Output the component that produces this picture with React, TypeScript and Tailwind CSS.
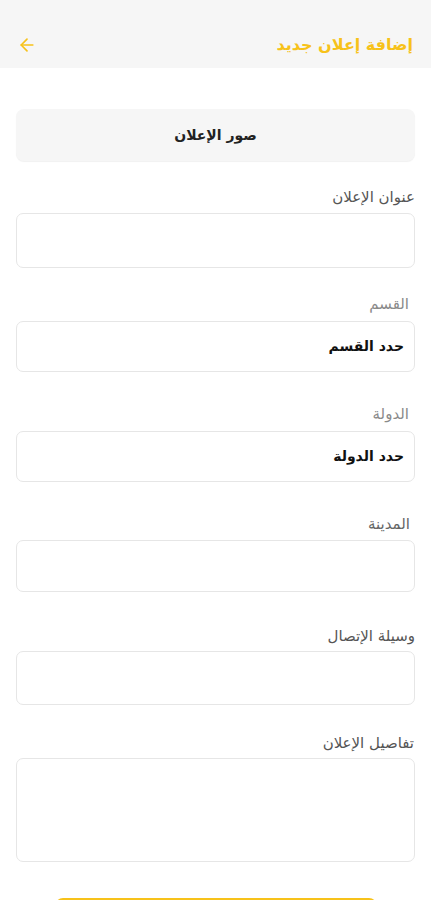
import { ArrowLeft } from 'lucide-react'

const fontStack = { fontFamily: '"DejaVu Sans", "Noto Sans", sans-serif' }

interface FieldProps {
  label: string
  labelClass: string
  boxClass: string
  value?: string
  wrapClass: string
}

function Field({ label, labelClass, boxClass, value, wrapClass }: FieldProps) {
  return (
    <div className={wrapClass}>
      <div className={`text-[15px] leading-[20px] ${labelClass}`}>{label}</div>
      <div
        className={`mx-[16px] border border-[#e6e6e6] rounded-[7px] bg-white flex items-center px-[10px] ${boxClass}`}
      >
        {value && <span className="text-[14px] font-bold text-[#111]">{value}</span>}
      </div>
    </div>
  )
}

export default function App() {
  return (
    <div dir="rtl" className="w-[431px] h-[900px] overflow-hidden bg-white" style={fontStack}>
      <header className="h-[68px] bg-[#f6f6f6] flex items-center justify-between pr-[18px] pl-[17px] pt-[22px]">
        <h1 className="text-[16px] font-bold text-[#f7c21a]">إضافة إعلان جديد</h1>
        <ArrowLeft size={20} strokeWidth={2} className="text-[#f7c21a]" />
      </header>

      <div className="mt-[41px] mx-[16px] h-[52px] rounded-[8px] bg-[#f6f6f6] shadow-[0_1px_1px_rgba(0,0,0,0.06)] flex items-center justify-center">
        <span className="text-[14px] font-bold text-[#222]">صور الإعلان</span>
      </div>

      <Field
        wrapClass="mt-[26px]"
        label="عنوان الإعلان"
        labelClass="text-[#555] pr-[16px] mb-[6px]"
        boxClass="h-[55px]"
      />
      <Field
        wrapClass="mt-[26px]"
        label="القسم"
        labelClass="text-[#8a8a8a] pr-[22px] mb-[7px]"
        boxClass="h-[51px]"
        value="حدد القسم"
      />
      <Field
        wrapClass="mt-[32px]"
        label="الدولة"
        labelClass="text-[#8a8a8a] pr-[22px] mb-[7px]"
        boxClass="h-[51px]"
        value="حدد الدولة"
      />
      <Field
        wrapClass="mt-[32px]"
        label="المدينة"
        labelClass="text-[#666] pr-[21px] mb-[6px]"
        boxClass="h-[52px]"
      />
      <Field
        wrapClass="mt-[34px]"
        label="وسيلة الإتصال"
        labelClass="text-[#555] pr-[16px] mb-[5px]"
        boxClass="h-[54px]"
      />
      <Field
        wrapClass="mt-[28px]"
        label="تفاصيل الإعلان"
        labelClass="text-[#555] pr-[17px] mb-[5px]"
        boxClass="h-[104px]"
      />

      <button className="block mt-[36px] mx-auto w-[322px] h-[50px] rounded-[8px] bg-[#f7c21a]" />
    </div>
  )
}
